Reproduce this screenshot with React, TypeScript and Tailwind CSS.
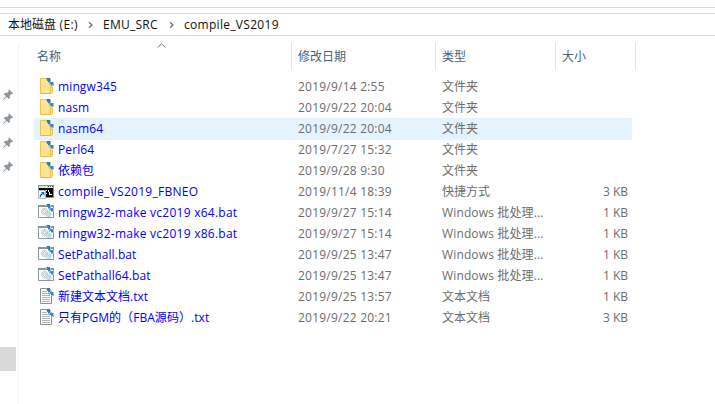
import type { ReactNode } from "react";

type Kind = "folder" | "shortcut" | "bat" | "txt";

interface Entry {
  name: string;
  date: string;
  type: string;
  size?: string;
  kind: Kind;
  hover?: boolean;
  tracking?: string;
}

const entries: Entry[] = [
  { name: "mingw345", date: "2019/9/14 2:55", type: "文件夹", kind: "folder", tracking: "tracking-[0.12px]" },
  { name: "nasm", date: "2019/9/22 20:04", type: "文件夹", kind: "folder", tracking: "tracking-[0.1px]" },
  { name: "nasm64", date: "2019/9/22 20:04", type: "文件夹", kind: "folder", hover: true, tracking: "tracking-[0.1px]" },
  { name: "Perl64", date: "2019/7/27 15:32", type: "文件夹", kind: "folder", tracking: "tracking-[0.1px]" },
  { name: "依赖包", date: "2019/9/28 9:30", type: "文件夹", kind: "folder" },
  { name: "compile_VS2019_FBNEO", date: "2019/11/4 18:39", type: "快捷方式", size: "3 KB", kind: "shortcut", tracking: "tracking-[0.27px]" },
  { name: "mingw32-make vc2019 x64.bat", date: "2019/9/27 15:14", type: "Windows 批处理...", size: "1 KB", kind: "bat", tracking: "tracking-[0.25px]" },
  { name: "mingw32-make vc2019 x86.bat", date: "2019/9/27 15:14", type: "Windows 批处理...", size: "1 KB", kind: "bat", tracking: "tracking-[0.25px]" },
  { name: "SetPathall.bat", date: "2019/9/25 13:47", type: "Windows 批处理...", size: "1 KB", kind: "bat", tracking: "tracking-[0.08px]" },
  { name: "SetPathall64.bat", date: "2019/9/25 13:47", type: "Windows 批处理...", size: "1 KB", kind: "bat", tracking: "tracking-[0.1px]" },
  { name: "新建文本文档.txt", date: "2019/9/25 13:57", type: "文本文档", size: "1 KB", kind: "txt" },
  { name: "只有PGM的（FBA源码）.txt", date: "2019/9/22 20:21", type: "文本文档", size: "3 KB", kind: "txt", tracking: "tracking-[0.06px]" },
];

/* Two small blue arrows marking a compressed item. */
function CompressedMark() {
  return (
    <g>
      <path d="M9 0h3v4h-2V3H9z" fill="#3683c0" />
      <path d="M9 0h2v1H9zM11 1h1v2h-1z" fill="#2670ab" />
      <path d="M8 0h1v2H8zM12 1h1v3h-1zM10 4h2v1h-2z" fill="#8fc4e9" />
      <path d="M12 4h3v3h-2V6h-1z" fill="#3f8fcf" />
      <path d="M13 5h2v2h-2z" fill="#2f82c4" />
      <path d="M11 5h1v2h-1zM15 4h1v4h-1zM13 7h2v1h-2z" fill="#8fc4e9" />
    </g>
  );
}

function FileIcon({ kind }: { kind: Kind }) {
  let art: ReactNode;
  if (kind === "folder") {
    art = (
      <>
        <path d="M2.5.5h10v15h-10z" fill="#ffe391" stroke="#ebc34f" />
        <path d="M3 15.5h9" stroke="#e6b93f" />
        <path d="M12.5 10.5l.6-1.6h1.4v5.4l-.8 1.2h-1.2z" fill="#ffe391" stroke="#e8bd45" strokeWidth=".9" />
        <CompressedMark />
      </>
    );
  } else if (kind === "shortcut") {
    art = (
      <g transform="translate(0 1)">
        <path d="M0 1h16v13H0z" fill="#8d9296" />
        <path d="M1 2h14v2H1z" fill="#dce0e3" />
        <path d="M10 2h1v1h-1zM12 2h1v1h-1zM14 2h1v1h-1z" fill="#3e4c59" />
        <path d="M1 4h14v9H1z" fill="#050505" />
        <path d="M8 6h1v1H8zM8 9h1v1H8zM10 6h1v2h1v3h-1V8h-1zM12 10h2v1h-2z" fill="#f4f4f4" />
        <path d="M.5 6.5h7v8h-7z" fill="#fff" stroke="#b7bdc3" />
        <path d="M2.3 13.3c-.2-2 .6-3 2.2-3.7" fill="none" stroke="#1765a9" strokeWidth="1.3" />
        <path d="M3 8h3.400v3.400z" fill="#1765a9" />
      </g>
    );
  } else if (kind === "bat") {
    art = (
      <>
        <path d="M.5 1.500h15v12H.5z" fill="#fcfdfd" stroke="#8e979c" />
        <path d="M0 1h16v2H0z" fill="#8a949a" />
        <circle cx="6.500" cy="7.500" r="3.1" fill="#f7f7f7" stroke="#a5adb1" strokeDasharray="1 .55" />
        <circle cx="6.500" cy="7.500" r="1.6" fill="#fff" stroke="#9ba4aa" strokeWidth=".8" />
        <circle cx="10.700" cy="10.300" r="2.2" fill="#e3f5fd" stroke="#9ac7df" strokeWidth="1.2" strokeDasharray="1.1 .45" />
        <circle cx="10.700" cy="10.300" r=".8" fill="#fff" stroke="#84b9d6" strokeWidth=".6" />
        <CompressedMark />
      </>
    );
  } else {
    art = (
      <>
        <path d="M2.5.5h8l3 3v12h-11z" fill="#fff" stroke="#8b8f91" />
        <path d="M4 3.500h5M4 5.500h8M4 7.500h8M4 9.500h8M4 11.500h8M4 13.500h8" stroke="#b0b3b5" />
        <CompressedMark />
      </>
    );
  }
  return (
    <svg className="mb-px size-4 shrink-0" viewBox="0 0 16 16">
      {art}
    </svg>
  );
}

function Pin() {
  return (
    <svg className="h-3 w-3" viewBox="0 0 12 12">
      <path d="M7.2.5l4 4-1.1.8-.8-.2-1.5 1.6.1 2.3-1 1L4.7 7.9 2 10.5l-1.5.9.9-1.5L4 7.2 1.700 5l1-1 2.300.1 1.600-1.500-.2-.8z" fill="#8b979e" />
    </svg>
  );
}

function Chevron() {
  return (
    <svg className="h-2 w-1.5" viewBox="0 0 6 8">
      <path d="M1 1.2L4 4 1 6.8" fill="none" stroke="#777" strokeWidth="1.4" />
    </svg>
  );
}

export default function App() {
  return (
    <div className="flex h-[404px] w-[715px] flex-col overflow-hidden bg-white pt-[7px] font-['Open_Sans','Noto_Sans_CJK_SC',sans-serif] text-[12px] leading-[20px] whitespace-nowrap">
      <div className="h-[7px] shrink-0 border-y border-[#d9d9d9]" />
      <nav className="flex h-[22px] shrink-0 items-center border-b border-[#d9d9d9] pl-2 text-[#111]">
        <span className="w-[80px]">
          本地磁盘<span className="tracking-[0.4px]"> (E:)</span>
        </span>
        <Chevron />
        <span className="ml-[9px] w-[66px] tracking-[0.25px]">EMU_SRC</span>
        <Chevron />
        <span className="ml-[9px] tracking-[0.3px]">compile_VS2019</span>
      </nav>
      <div className="flex min-h-0 flex-1 pt-[7px]">
        <aside className="flex w-[19px] shrink-0 flex-col border-r border-[#f3f3f3] pt-[46px] pl-[2px]">
          <div className="flex flex-col gap-3">
            <Pin />
            <Pin />
            <Pin />
            <Pin />
          </div>
          <div className="mt-[174px] -ml-[2px] h-6 w-4 bg-[#d9d9d9]" />
        </aside>
        <main className="flex-1 pl-[15px]">
          <header className="relative grid h-[27px] w-[602px] grid-cols-[258px_144px_120px_80px] items-center text-[#4c607a]">
            <svg className="absolute top-0 left-[123px] h-[5px] w-[9px]" viewBox="0 0 9 5">
              <path d="M.7 4.5l3.8-3.8 3.8 3.8" fill="none" stroke="#707070" />
            </svg>
            <span className="flex h-full items-center border-r border-[#e3e3e3] pl-[3px]">名称</span>
            <span className="flex h-full items-center border-r border-[#e3e3e3] pl-[6px]">修改日期</span>
            <span className="flex h-full items-center border-r border-[#e3e3e3] pl-[6px]">类型</span>
            <span className="flex h-full items-center border-r border-[#e3e3e3] pl-[6px]">大小</span>
          </header>
          <ul className="mt-[6px] w-[598px] text-[#6d6d6d]">
            {entries.map((e) => (
              <li
                key={e.name}
                className={`grid grid-cols-[264px_144px_120px_66px] grid-rows-[21px] items-center ${e.hover ? "-mb-px h-[22px] bg-[#e5f3ff]" : "h-[21px]"}`}
              >
                <span className="flex items-center pl-1 text-[#0000ff]">
                  <FileIcon kind={e.kind} />
                  <span className={`pl-1 ${e.tracking ?? ""}`}>{e.name}</span>
                </span>
                <span className="tracking-[0.22px]">{e.date}</span>
                <span className={e.type.startsWith("Windows") ? "tracking-[0.14px]" : ""}>{e.type}</span>
                <span className="text-right">{e.size}</span>
              </li>
            ))}
          </ul>
        </main>
      </div>
    </div>
  );
}
